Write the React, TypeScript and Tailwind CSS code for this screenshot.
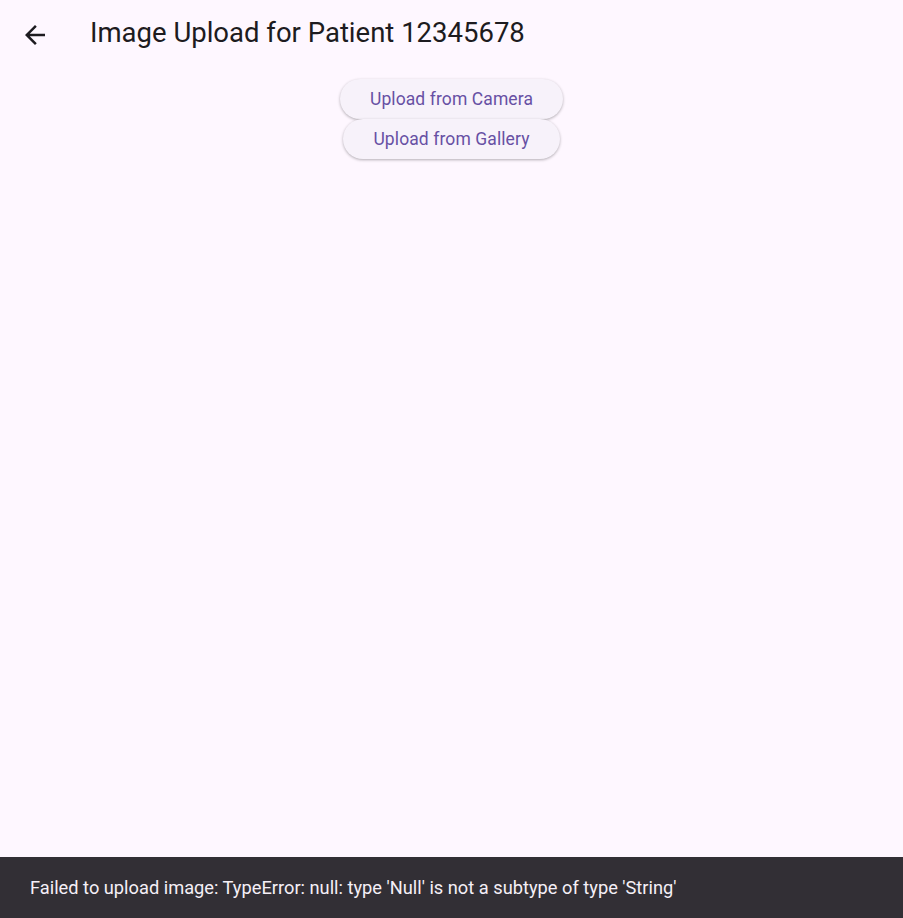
function BackArrow() {
  return (
    <svg width="30" height="30" viewBox="0 0 24 24" fill="currentColor">
      <path d="M20 11H7.83l5.59-5.59L12 4l-8 8 8 8 1.41-1.41L7.83 13H20v-2z" />
    </svg>
  );
}

export default function App() {
  return (
    <div
      className="relative flex h-[918px] w-full flex-col overflow-hidden bg-[#fef7ff] text-[#1d1b20]"
      style={{ fontFamily: 'Roboto, "Noto Sans", sans-serif' }}
    >
      <header className="flex h-[66px] shrink-0 items-center">
        <button className="ml-[20px] mt-[4px] flex h-[30px] w-[30px] items-center justify-center text-[#1d1b20]">
          <BackArrow />
        </button>
        <h1 className="ml-[40px] text-[27.5px] leading-[34px] font-normal">Image Upload for Patient 12345678</h1>
      </header>

      <main className="flex flex-1 flex-col items-center pt-[13px]">
        <button className="h-[40px] rounded-full bg-[#f7f2fa] px-[30px] text-[17.5px] font-normal tracking-[0.1px] text-[#6750a4] shadow-[0_1px_3px_rgba(0,0,0,0.3)]">
          Upload from Camera
        </button>
        <button className="h-[40px] rounded-full bg-[#f7f2fa] px-[30px] text-[17.5px] font-normal tracking-[0.1px] text-[#6750a4] shadow-[0_1px_3px_rgba(0,0,0,0.3)]">
          Upload from Gallery
        </button>
      </main>

      <div className="flex h-[61px] shrink-0 items-center bg-[#322f35] pl-[30px]">
        <span className="text-[18.25px] text-[#f5eff7]">
          Failed to upload image: TypeError: null: type 'Null' is not a subtype of type 'String'
        </span>
      </div>
    </div>
  );
}
